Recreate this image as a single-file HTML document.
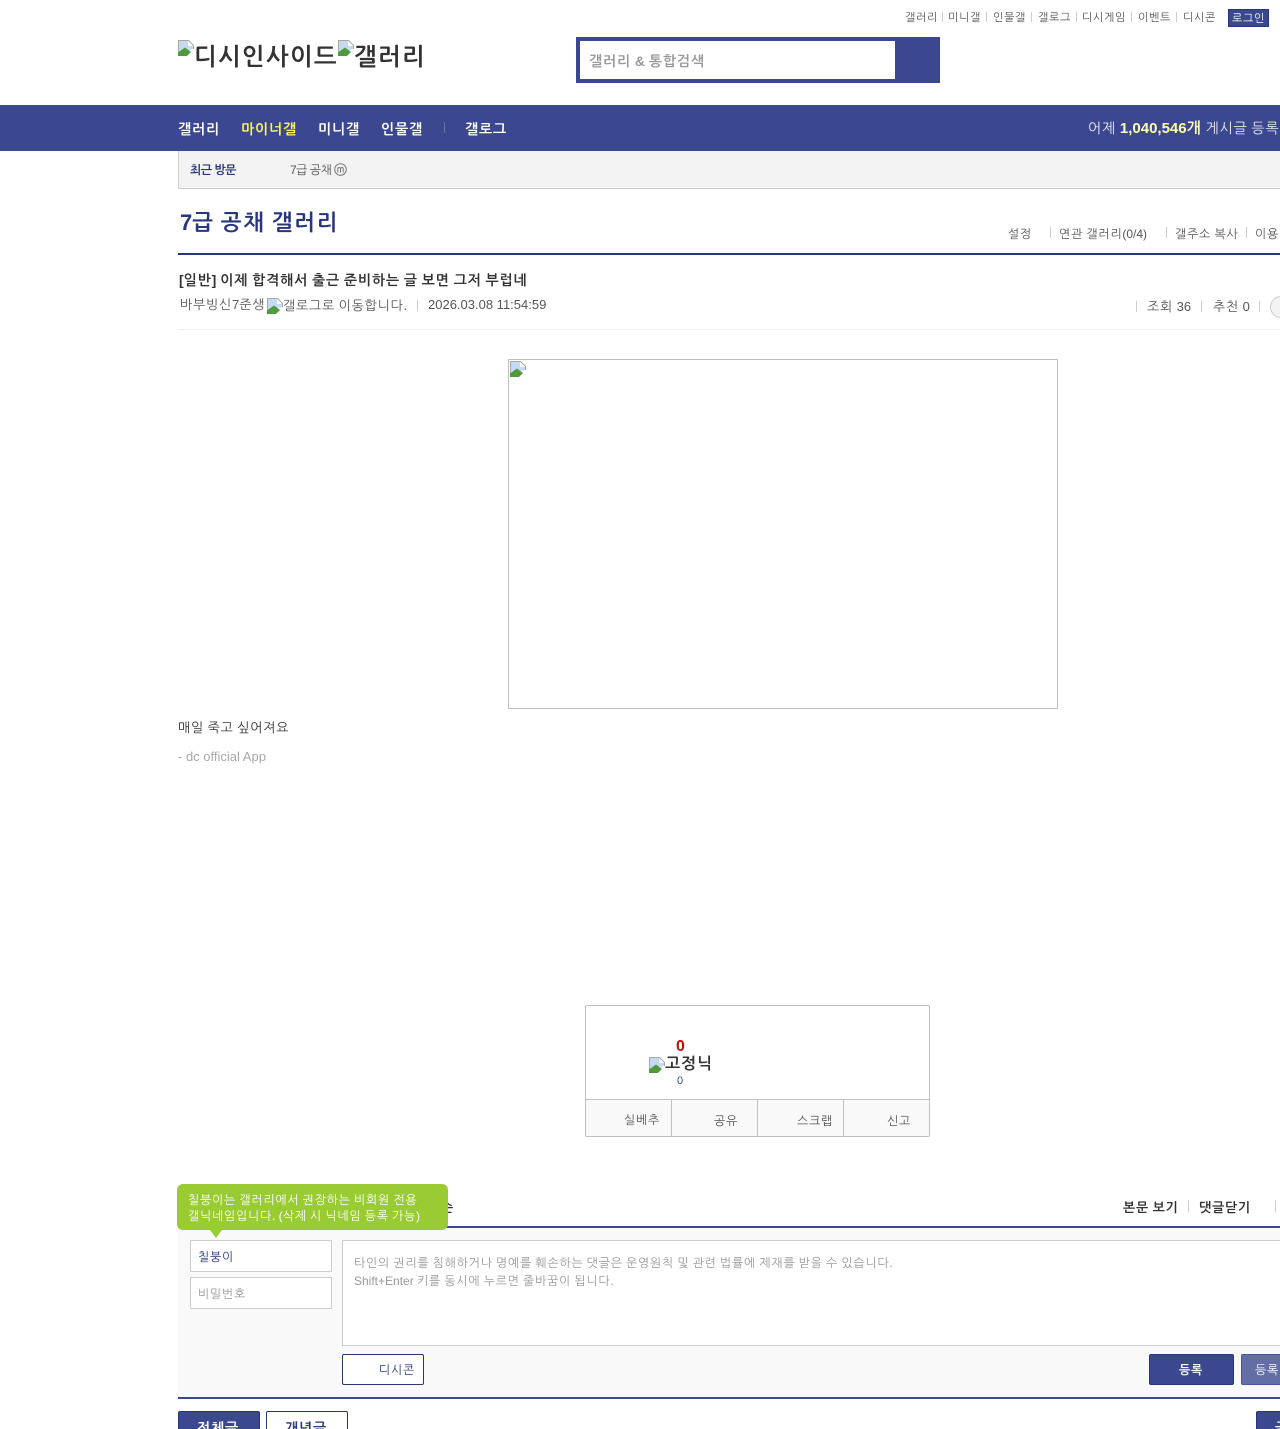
<!DOCTYPE html>
<html lang="ko"><head><meta charset="utf-8"><title>7급 공채 갤러리</title>
<style>
html,body{margin:0;padding:0;background:#fff;width:1280px;height:1429px;overflow:hidden}
body{position:relative;font-family:"Liberation Sans","NanumGothic",sans-serif;color:#333}
.a{position:absolute}
.t{position:absolute;white-space:nowrap;line-height:20px;letter-spacing:.06em;word-spacing:-.06em}
.l{letter-spacing:0;word-spacing:0}
.v{position:absolute;width:1px;background:#ccc}
b{font-weight:bold}
</style></head><body>
<svg width="0" height="0" style="position:absolute"><defs><symbol id="bk" viewBox="0 0 16 16">
<path d="M0 16V0H11L16 5V16Z" fill="#fff"/>
<path d="M.5 14V.5H10.5L15.5 5.5V9" fill="none" stroke="#a8a8a8"/>
<path d="M1 1H10V6H15V9L1 12Z" fill="#c6d9f4"/>
<path d="M0 16V12.5L7 7.5L13 12L9 16Z" fill="#4f9a3c"/>
<path d="M9 16L16 9.5V16Z" fill="#fff"/>
</symbol></defs></svg>

<div class="t" style="left:905px;top:8px;font-size:11px;color:#555">갤러리</div>
<div class="v" style="left:942px;top:12px;height:10px"></div>
<div class="t" style="left:948px;top:8px;font-size:11px;color:#555">미니갤</div>
<div class="v" style="left:986px;top:12px;height:10px"></div>
<div class="t" style="left:993px;top:8px;font-size:11px;color:#555">인물갤</div>
<div class="v" style="left:1031px;top:12px;height:10px"></div>
<div class="t" style="left:1038px;top:8px;font-size:11px;color:#555">갤로그</div>
<div class="v" style="left:1076px;top:12px;height:10px"></div>
<div class="t" style="left:1082px;top:8px;font-size:11px;color:#555">디시게임</div>
<div class="v" style="left:1131px;top:12px;height:10px"></div>
<div class="t" style="left:1138px;top:8px;font-size:11px;color:#555">이벤트</div>
<div class="v" style="left:1176px;top:12px;height:10px"></div>
<div class="t" style="left:1183px;top:8px;font-size:11px;color:#555">디시콘</div>
<div class="a" style="left:1228px;top:9px;width:39px;height:16px;background:#3b4890;border:1px solid #29367c"></div>
<div class="t" style="left:1232px;top:9px;font-size:11px;color:#fff">로그인</div>

<svg class="a" style="left:178px;top:40px" width="16" height="16"><use href="#bk"/></svg>
<div class="t" style="left:194px;top:46px;font-size:24px;font-weight:bold;line-height:24px;color:#333">디시인사이드</div>
<svg class="a" style="left:338px;top:40px" width="16" height="16"><use href="#bk"/></svg>
<div class="t" style="left:354px;top:46px;font-size:24px;font-weight:bold;line-height:24px;color:#333">갤러리</div>

<div class="a" style="left:576px;top:37px;width:364px;height:46px;background:#3b4890"></div>
<div class="a" style="left:580px;top:41px;width:315px;height:38px;background:#fff"></div>
<div class="t" style="left:589px;top:51px;font-size:14px;font-weight:bold;color:#999">갤러리 <span class="l">&amp;</span> 통합검색</div>

<div class="a" style="left:0;top:105px;width:1280px;height:46px;background:#3b4890"></div>
<div class="t" style="left:178px;top:119px;font-size:14px;font-weight:bold;color:#fff">갤러리</div>
<div class="t" style="left:241px;top:119px;font-size:14px;font-weight:bold;color:#fff35e">마이너갤</div>
<div class="t" style="left:318px;top:119px;font-size:14px;font-weight:bold;color:#fff">미니갤</div>
<div class="t" style="left:381px;top:119px;font-size:14px;font-weight:bold;color:#fff">인물갤</div>
<div class="v" style="left:444px;top:122px;height:11px;background:#6a74ac"></div>
<div class="t" style="left:465px;top:119px;font-size:14px;font-weight:bold;color:#fff">갤로그</div>
<div class="t" style="left:1088px;top:118px;font-size:14px;color:#e8e9f2">어제 <b style="color:#fffbb0;font-size:15px"><span class="l">1,040,546</span>개</b> 게시글 등록</div>

<div class="a" style="left:178px;top:151px;width:1102px;height:37px;background:#f3f3f3;border-left:1px solid #ccc;border-bottom:1px solid #ccc"></div>
<div class="t" style="left:190px;top:160px;font-size:12px;font-weight:bold;color:#29367c;letter-spacing:-.5px;word-spacing:0">최근 방문</div>
<div class="t" style="left:290px;top:160px;font-size:12px;color:#555;letter-spacing:-.5px;word-spacing:0">7급 공채</div>
<svg class="a" style="left:334px;top:163px" width="13" height="13" viewBox="0 0 13 13"><circle cx="6.5" cy="6.5" r="5.8" fill="none" stroke="#777"/><path d="M3.8 9.5V4.5M3.8 5.5Q5.2 3.6 6.5 5.2V9.5M6.5 5.5Q8 3.6 9.2 5.2V9.5" fill="none" stroke="#777"/></svg>

<div class="t" style="left:180px;top:208px;font-size:22px;font-weight:bold;line-height:30px;color:#29367c;letter-spacing:.08em;word-spacing:-.08em"><span class="l">7</span>급 공채 갤러리</div>
<div class="t" style="left:1008px;top:224px;font-size:12px;color:#555">설정</div>
<div class="v" style="left:1050px;top:227px;height:11px"></div>
<div class="t" style="left:1059px;top:224px;font-size:12px;color:#555">연관 갤러리<span class="l">(0/4)</span></div>
<div class="v" style="left:1166px;top:227px;height:11px"></div>
<div class="t" style="left:1175px;top:224px;font-size:12px;color:#555">갤주소 복사</div>
<div class="v" style="left:1246px;top:227px;height:11px"></div>
<div class="t" style="left:1255px;top:224px;font-size:12px;color:#555">이용 안내</div>
<div class="a" style="left:178px;top:253px;width:1102px;height:2px;background:#29367c"></div>

<div class="t" style="left:179px;top:270px;font-size:14px;font-weight:bold;color:#333"><span class="l">[</span>일반<span class="l">]</span> 이제 합격해서 출근 준비하는 글 보면 그저 부럽네</div>
<div class="t" style="left:180px;top:295px;font-size:13px;color:#555">바부빙신<span class="l">7</span>준생</div>
<svg class="a" style="left:267px;top:298px" width="16" height="16"><use href="#bk"/></svg>
<div class="t" style="left:283px;top:296px;font-size:13px;color:#555">갤로그로 이동합니다<span class="l">.</span></div>
<div class="v" style="left:417px;top:300px;height:11px"></div>
<div class="t" style="left:428px;top:295px;font-size:13px;color:#555;letter-spacing:0;word-spacing:0">2026.03.08 11:54:59</div>
<div class="v" style="left:1136px;top:301px;height:11px"></div>
<div class="t" style="left:1147px;top:297px;font-size:13px;color:#555">조회 <span class="l">36</span></div>
<div class="v" style="left:1201px;top:301px;height:11px"></div>
<div class="t" style="left:1213px;top:297px;font-size:13px;color:#555">추천 <span class="l">0</span></div>
<div class="v" style="left:1259px;top:301px;height:11px"></div>
<div class="a" style="left:1270px;top:296px;width:22px;height:22px;box-sizing:border-box;border-radius:50%;background:#f3f3f3;border:1px solid #ccc"></div>
<div class="a" style="left:178px;top:329px;width:1102px;height:1px;background:#eee"></div>

<div class="a" style="left:508px;top:359px;width:548px;height:348px;border:1px solid #c0c0c0"></div>
<svg class="a" style="left:510px;top:361px" width="16" height="16"><use href="#bk"/></svg>
<div class="t" style="left:178px;top:718px;font-size:13px;color:#333">매일 죽고 싶어져요</div>
<div class="t" style="left:178px;top:747px;font-size:13px;color:#aaa;letter-spacing:0;word-spacing:0">- dc official App</div>

<div class="a" style="left:585px;top:1005px;width:343px;height:130px;border:1px solid #c0c0c0;border-radius:2px;overflow:hidden">
<div class="a" style="left:0;top:93px;width:343px;height:37px;background:#f9f9f9;border-top:1px solid #c0c0c0"></div>
<div class="v" style="left:85px;top:93px;height:37px;background:#c0c0c0"></div>
<div class="v" style="left:171px;top:93px;height:37px;background:#c0c0c0"></div>
<div class="v" style="left:257px;top:93px;height:37px;background:#c0c0c0"></div>
</div>
<div class="t" style="left:676px;top:1037px;font-size:16px;font-weight:bold;color:#c00f00;letter-spacing:0">0</div>
<svg class="a" style="left:649px;top:1057px" width="16" height="16"><use href="#bk"/></svg>
<div class="t" style="left:665px;top:1055px;font-size:16px;font-weight:bold;color:#333">고정닉</div>
<div class="t" style="left:677px;top:1071px;font-size:11px;color:#3b4890;letter-spacing:0">0</div>
<div class="t" style="left:624px;top:1110px;font-size:12px;color:#555">실베추</div>
<div class="t" style="left:714px;top:1111px;font-size:12px;color:#555">공유</div>
<div class="t" style="left:797px;top:1111px;font-size:12px;color:#555">스크랩</div>
<div class="t" style="left:887px;top:1111px;font-size:12px;color:#555">신고</div>

<div class="t" style="left:441px;top:1198px;font-size:13px;font-weight:bold;color:#333">순</div>
<div class="t" style="left:1123px;top:1198px;font-size:13px;font-weight:bold;color:#333">본문 보기</div>
<div class="v" style="left:1188px;top:1200px;height:12px"></div>
<div class="t" style="left:1199px;top:1198px;font-size:13px;font-weight:bold;color:#333">댓글닫기</div>
<div class="v" style="left:1275px;top:1200px;height:12px"></div>
<div class="a" style="left:178px;top:1226px;width:1102px;height:2px;background:#3b4890"></div>
<div class="a" style="left:178px;top:1228px;width:1102px;height:169px;background:#f9f9f9"></div>
<div class="a" style="left:178px;top:1397px;width:1102px;height:2px;background:#3b4890"></div>

<div class="a" style="left:177px;top:1184px;width:271px;height:46px;background:#9c3;border-radius:6px"></div>
<div class="a" style="left:210px;top:1230px;border-left:6px solid transparent;border-right:6px solid transparent;border-top:8px solid #9c3"></div>
<div class="t" style="left:188px;top:1192px;font-size:12px;line-height:16px;color:#fff">칠붕이는 갤러리에서 권장하는 비회원 전용<br>갤닉네임입니다<span class="l">. (</span>삭제 시 닉네임 등록 가능<span class="l">)</span></div>

<div class="a" style="left:190px;top:1240px;width:140px;height:30px;background:#fff;border:1px solid #ccc"></div>
<div class="t" style="left:198px;top:1247px;font-size:12px;color:#29367c">칠붕이</div>
<div class="a" style="left:190px;top:1277px;width:140px;height:30px;background:#fff;border:1px solid #ccc"></div>
<div class="t" style="left:198px;top:1284px;font-size:12px;color:#999">비밀번호</div>
<div class="a" style="left:342px;top:1240px;width:938px;height:104px;background:#fff;border:1px solid #ccc;border-right:0"></div>
<div class="t" style="left:354px;top:1254px;font-size:12px;line-height:18px;color:#999">타인의 권리를 침해하거나 명예를 훼손하는 댓글은 운영원칙 및 관련 법률에 제재를 받을 수 있습니다<span class="l">.</span><br><span class="l">Shift+Enter</span> 키를 동시에 누르면 줄바꿈이 됩니다<span class="l">.</span></div>
<div class="a" style="left:342px;top:1354px;width:80px;height:29px;background:#fff;border:1px solid #29367c;border-radius:2px"></div>
<div class="t" style="left:379px;top:1360px;font-size:12px;color:#29367c">디시콘</div>
<div class="a" style="left:1149px;top:1354px;width:83px;height:29px;background:#3b4890;border:1px solid #29367c;border-radius:2px"></div>
<div class="t" style="left:1179px;top:1360px;font-size:12px;font-weight:bold;color:#fff">등록</div>
<div class="a" style="left:1241px;top:1354px;width:60px;height:29px;background:#636ea5;border:1px solid #4a5693;border-radius:2px"></div>
<div class="t" style="left:1255px;top:1360px;font-size:12px;color:#fff">등록</div>

<div class="a" style="left:178px;top:1411px;width:80px;height:40px;background:#3b4890;border:1px solid #29367c;border-radius:2px"></div>
<div class="t" style="left:197px;top:1418px;font-size:14px;font-weight:bold;color:#fff">전체글</div>
<div class="a" style="left:266px;top:1411px;width:80px;height:40px;background:#fff;border:1px solid #29367c;border-radius:2px"></div>
<div class="t" style="left:285px;top:1418px;font-size:14px;font-weight:bold;color:#29367c">개념글</div>
<div class="a" style="left:1256px;top:1411px;width:60px;height:40px;background:#3b4890;border:1px solid #29367c;border-radius:2px"></div>
<div class="t" style="left:1275px;top:1418px;font-size:14px;font-weight:bold;color:#fff">글쓰기</div>
</body></html>
